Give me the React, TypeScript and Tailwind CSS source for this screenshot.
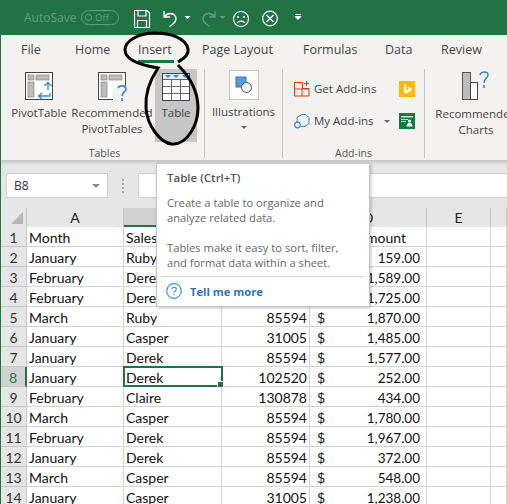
const ui = { fontFamily: '"Open Sans", "Noto Sans", sans-serif' };

const rows: [string, string, string, string, string][] = [
  ["Month", "Sales", "", "", "Amount"],
  ["January", "Ruby", "", "", "159.00"],
  ["February", "Derek", "", "", "1,589.00"],
  ["February", "Derek", "", "", "1,725.00"],
  ["March", "Ruby", "85594", "$", "1,870.00"],
  ["January", "Casper", "31005", "$", "1,485.00"],
  ["January", "Derek", "85594", "$", "1,577.00"],
  ["January", "Derek", "102520", "$", "252.00"],
  ["February", "Claire", "130878", "$", "434.00"],
  ["March", "Casper", "85594", "$", "1,780.00"],
  ["February", "Derek", "85594", "$", "1,967.00"],
  ["January", "Derek", "85594", "$", "372.00"],
  ["March", "Casper", "85594", "$", "548.00"],
  ["January", "Casper", "31005", "$", "1,238.00"],
];

function TitleBar() {
  return (
    <div className="h-[35px] bg-[#217346] flex items-center pl-[23px] text-[#5f9f7d]" style={ui}>
      <span className="text-[12px] w-[57px] leading-none">AutoSave</span>
      <span className="w-[38px] h-[15px] shrink-0 rounded-full border border-[#5f9f7d] flex items-center pl-[3px] gap-[3px] text-[9.500px] leading-none">
        <span className="w-[7px] h-[7px] rounded-full border border-[#5f9f7d]" />
        Off
      </span>
      <svg width="200" height="35" viewBox="0 0 200 35" className="ml-[15px] shrink-0" fill="none">
        <g stroke="#fff" strokeWidth="1.200">
          <path d="M.5 10.500H13l2.500 2.500v14.500H.5z" />
          <path d="M4 10.500v5.500h8v-5.500M3.500 27.500v-7h9v7" />
        </g>
        <path d="M30 11v6h6M30.500 16.500c3-4 9-4 11 0 2 4-1 7-6 10" stroke="#fff" strokeWidth="1.300" />
        <path d="M50.500 16h6l-3 3z" fill="#fff" />
        <path d="M81 11v6h-6M80.500 16.500c-3-4-9-4-11 0-2 4 1 7 6 10" stroke="#5f9f7d" strokeWidth="1.300" />
        <path d="M85.500 16h6l-3 3z" fill="#5f9f7d" />
        <circle cx="107" cy="19" r="7.500" stroke="#fff" strokeWidth="1.200" />
        <circle cx="104" cy="17" r="1" fill="#fff" />
        <circle cx="110" cy="17" r="1" fill="#fff" />
        <path d="M103 23c2-2.500 6-2.500 8 0" stroke="#fff" strokeWidth="1.200" />
        <circle cx="136" cy="18.500" r="7.300" stroke="#fff" strokeWidth="1.200" />
        <path d="M132.500 15l7 7M139.500 15l-7 7" stroke="#fff" strokeWidth="1.200" />
        <path d="M161 14.500h6M161 16.500h6l-3 3z" fill="#fff" stroke="#fff" strokeWidth="1" />
      </svg>
    </div>
  );
}

function Tabs() {
  const tabs: [string, string][] = [
    ["File", "w-[54px]"],
    ["Home", "w-[63px]"],
    ["Insert", "w-[64px]"],
    ["Page Layout", "w-[101px]"],
    ["Formulas", "w-[82px]"],
    ["Data", "w-[56px]"],
    ["Review", "w-[60px]"],
  ];
  return (
    <div className="h-[33px] flex pl-[20px] text-[12.500px] text-[#444]" style={ui}>
      {tabs.map(([t, w]) => (
        <div key={t} className={`${w} shrink-0 relative pt-[6px] leading-[18px] whitespace-nowrap`}>
          {t}
          {t === "Insert" && <div className="absolute left-0 top-[25px] w-[36px] h-[3px] bg-[#217346]" />}
        </div>
      ))}
    </div>
  );
}

function PivotIcon({ help }: { help?: boolean }) {
  return (
    <svg width="34" height="32" viewBox="0 0 34 32" fill="none">
      <rect x="3.500" y="1.500" width="27" height="27" fill="#fff" stroke="#444" />
      <rect x="6" y="4" width="6" height="5" fill="#bdbdbd" stroke="#777" strokeWidth=".6" />
      <rect x="14" y="4" width="13" height="5" fill="#bdbdbd" stroke="#777" strokeWidth=".6" />
      <rect x="6" y="11" width="6" height="15" fill="#bdbdbd" stroke="#777" strokeWidth=".6" />
      {help ? (
        <g>
          <rect x="18" y="17" width="15" height="14" fill="#f3f2f1" />
          <path d="M23 17c1-3 8-3 8 1 0 3-4 3-4 7M27 27v3" stroke="#2e8ad0" strokeWidth="1.600" />
        </g>
      ) : (
        <path d="M28 22v3H17M20 22l-3.500 3 3.500 3M26 19v-7M22.500 15l3.500-3.500 3.500 3.500" stroke="#2e8ad0" strokeWidth="1.300" />
      )}
    </svg>
  );
}

function BigButton({ w, icon, lines, hot, extra = "" }: { w: string; icon: React.ReactNode; lines: string[]; hot?: boolean; extra?: string }) {
  return (
    <div className={`${w} ${extra} shrink-0 h-[73px] flex flex-col items-center ${hot ? "bg-[#c6c6c6]" : ""}`}>
      <div className="h-[36px] flex items-center justify-center">{icon}</div>
      {lines.map((l) => (
        <div key={l} className="text-[11.500px] leading-[16px] whitespace-nowrap text-[#444]">{l}</div>
      ))}
    </div>
  );
}

function GroupLabel({ children }: { children: React.ReactNode }) {
  return <div className="text-center text-[10.500px] leading-[16px] text-[#555] shrink-0">{children}</div>;
}

function Ribbon() {
  return (
    <div className="h-[92px] flex pl-[4px] pt-[1px] text-[#444]" style={ui}>
      <div className="w-[200px] shrink-0 border-r border-[#c6c6c6] h-[89px] flex flex-col">
        <div className="flex h-[76px] shrink-0">
          <BigButton w="w-[68px]" icon={<PivotIcon />} lines={["PivotTable"]} />
          <BigButton w="w-[78px]" icon={<PivotIcon help />} lines={["Recommended", "PivotTables"]} />
          <BigButton
            w="w-[42px]"
            extra="ml-[4px]"
            hot
            lines={["Table"]}
            icon={
              <svg width="29" height="29" viewBox="0 0 29 29" fill="none">
                <rect x=".5" y=".5" width="27" height="27" fill="#fff" stroke="#444" />
                <path d="M1 1h26v5H1z" fill="#e6eef5" />
                <path d="M3 2h6l-3 3zM11 2h6l-3 3zM20 2h6l-3 3z" fill="#2e8ad0" />
                <path d="M1 6.500h26M1 13.500h26M1 20.500h26M9.500 6.500v21M18.500 6.500v21" stroke="#666" />
              </svg>
            }
          />
        </div>
        <GroupLabel>Tables</GroupLabel>
      </div>
      <div className="w-[78px] shrink-0 border-r border-[#c6c6c6] h-[89px] flex flex-col items-center">
        <div className="w-[30px] h-[30px] mt-[1px] bg-white border border-[#c6c6c6] flex items-center justify-center">
          <svg width="18" height="18" viewBox="0 0 18 18">
            <rect x="1" y="1" width="10" height="10" fill="#5b9bd5" stroke="#2e75b6" />
            <circle cx="11.500" cy="11.500" r="5" fill="#f3f2f1" stroke="#555" />
          </svg>
        </div>
        <div className="text-[11.500px] leading-[16px] mt-[4px] whitespace-nowrap">Illustrations</div>
        <div className="mt-[6px] w-0 h-0 border-x-[3px] border-x-transparent border-t-[3px] border-t-[#666]" />
      </div>
      <div className="w-[142px] shrink-0 border-r border-[#c6c6c6] h-[89px] flex flex-col">
        <div className="h-[76px] shrink-0 pl-[11px] pt-[12px] flex flex-col gap-[16px] text-[11.500px]">
          <div className="h-[16px] flex items-center whitespace-nowrap">
            <svg width="16" height="16" viewBox="0 0 16 16" fill="none" className="shrink-0">
              <path d="M.5 1.500h8v6h6.500v7.500H.5zM.5 8h14M8 8v7" stroke="#d83b01" strokeWidth="1" />
              <path d="M12.500 0v5M10 2.500h5" stroke="#d83b01" />
            </svg>
            <span className="ml-[4px] w-[85px]">Get Add-ins</span>
            <svg width="16" height="16" viewBox="0 0 16 16" className="shrink-0">
              <rect width="16" height="16" fill="#ffb900" />
              <path d="M5 3l2 .8v6l3-1.600-1.500-.8-.8-2 5 1.800v2.300L7 12.800 5 11.500z" fill="#fff" />
            </svg>
          </div>
          <div className="h-[16px] flex items-center whitespace-nowrap">
            <svg width="16" height="16" viewBox="0 0 16 16" fill="none" className="shrink-0">
              <path d="M3 9V4.500L8 1.500h3l4 3v6l-4 3H7" stroke="#2e8ad0" strokeWidth="1" />
              <circle cx="3.500" cy="12" r="2.800" stroke="#2e8ad0" strokeWidth="1.200" />
            </svg>
            <span className="ml-[4px] w-[70px]">My Add-ins</span>
            <span className="w-0 h-0 border-x-[3px] border-x-transparent border-t-[3px] border-t-[#666] mr-[9px]" />
            <svg width="16" height="16" viewBox="0 0 16 16" className="shrink-0">
              <rect width="16" height="16" fill="#107c41" />
              <path d="M2 3h12v1.500H2zM2 6h7v1H2zM2 8h5v1H2z" fill="#bfe0cd" />
              <circle cx="10.500" cy="8" r="1.600" fill="#fff" />
              <path d="M7.500 13.500c0-5 6-5 6 0z" fill="#fff" />
            </svg>
          </div>
        </div>
        <GroupLabel>Add-ins</GroupLabel>
      </div>
      <div className="w-[102px] shrink-0 flex flex-col items-center">
        <svg width="30" height="32" viewBox="0 0 30 32" fill="none">
          <rect x="1.500" y="3.500" width="8" height="27" fill="#bdbdbd" stroke="#555" />
          <rect x="9.500" y="13.500" width="7" height="17" fill="#fff" stroke="#444" />
          <path d="M19 6c1-4 8-4 8 0 0 3-4 3.500-4 8M23 16v3" stroke="#2e8ad0" strokeWidth="1.500" />
        </svg>
        <div className="text-[11.500px] leading-[16px] mt-[5px] whitespace-nowrap">Recommended</div>
        <div className="text-[11.500px] leading-[16px]">Charts</div>
      </div>
    </div>
  );
}

function FormulaBar() {
  return (
    <div className="h-[48px] bg-[#e6e6e6] pt-[13px] flex items-start relative" style={ui}>
      <div className="absolute left-0 right-0 top-0 h-[5px] bg-gradient-to-b from-[#c4c4c4] to-[#e6e6e6]" />
      <div className="ml-[5px] w-[102px] h-[25px] bg-white border border-[#d0d0d0] flex items-center justify-between pl-[7px] pr-[7px] text-[12px] text-[#333]">
        B8
        <span className="w-0 h-0 border-x-[4px] border-x-transparent border-t-[4px] border-t-[#888]" />
      </div>
      <div className="w-[30px] h-[25px] flex flex-col items-center justify-center gap-[2px]">
        <span className="w-[2px] h-[2px] bg-[#aaa]" />
        <span className="w-[2px] h-[2px] bg-[#aaa]" />
        <span className="w-[2px] h-[2px] bg-[#aaa]" />
        <span className="w-[2px] h-[2px] bg-[#aaa]" />
      </div>
      <div className="flex-1 h-[25px] bg-white border border-[#d0d0d0] border-r-0" />
    </div>
  );
}

function ColHeaders() {
  const cols: [string, string, string][] = [
    ["A", "w-[97px]", "bg-[#e6e6e6]"],
    ["B", "w-[98px]", "bg-[#d2d2d2] border-b-2 border-b-[#217346]"],
    ["C", "w-[88px]", "bg-[#e6e6e6]"],
    ["D", "w-[117px]", "bg-[#e6e6e6]"],
    ["E", "w-[64px]", "bg-[#e6e6e6]"],
    ["", "flex-1", "bg-[#e6e6e6]"],
  ];
  return (
    <div className="h-[19px] flex bg-[#e6e6e6] text-[14px] text-[#222]" style={{ fontFamily: '"Lato", sans-serif' }}>
      <div className="w-[26px] shrink-0 box-border border-r border-[#c8c8c8] relative">
        <div className="absolute right-[3px] bottom-[3px] w-0 h-0 border-l-[12px] border-l-transparent border-b-[12px] border-b-[#b7b7b7]" />
      </div>
      {cols.map(([c, w, bg]) => (
        <div key={c || "F"} className={`${w} ${bg} box-border border-r border-[#c8c8c8] text-center leading-[20px]`}>{c}</div>
      ))}
    </div>
  );
}

function Grid() {
  const cell = "h-[20px] bg-white box-border border-r border-b border-[#d4d4d4] leading-[22px] px-[2px] whitespace-nowrap overflow-hidden";
  return (
    <div className="text-[14px] text-[#111]" style={{ fontFamily: '"Lato", sans-serif' }}>
      {rows.map((r, i) => {
        const active = i === 7;
        return (
          <div key={i} className="flex h-[20px]">
            <div className={`w-[26px] shrink-0 h-[20px] box-border border-b text-center leading-[22px] ${active ? "bg-[#d2d2d2] text-[#217346] border-b-[#c8c8c8] border-r-2 border-r-[#217346]" : "bg-[#e6e6e6] text-[#333] border-b-[#c8c8c8] border-r border-r-[#c8c8c8]"}`}>
              {i + 1}
            </div>
            <div className={`w-[97px] shrink-0 ${cell}`}>{r[0]}</div>
            <div className={`w-[98px] shrink-0 ${cell} relative !overflow-visible`}>
              {r[1]}
              {active && (
                <div className="absolute left-[-1px] top-[-1px] w-[100px] h-[21px] border-2 border-[#217346]">
                  <div className="absolute right-[-3px] bottom-[-3px] w-[5px] h-[5px] bg-[#217346] border border-white box-content" />
                </div>
              )}
            </div>
            <div className={`w-[88px] shrink-0 ${cell} text-right`}>{r[2]}</div>
            <div className={`w-[117px] shrink-0 ${cell} flex justify-between pl-[7px] ${i === 0 ? "pr-[20px]" : "pr-[6px]"}`}>
              <span>{r[3]}</span>
              <span className={i > 0 ? "text-[13.500px]" : ""}>{r[4]}</span>
            </div>
            <div className={`w-[64px] shrink-0 ${cell}`} />
            <div className={`flex-1 ${cell}`} />
          </div>
        );
      })}
    </div>
  );
}

function Tooltip() {
  return (
    <div className="absolute left-[155px] top-[163px] w-[214px] h-[144px] box-border bg-white border border-[#c6c6c6] shadow-[1px_1px_3px_rgba(0,0,0,0.25)] text-[11.200px] leading-[15px] text-[#666] pt-[6px]" style={ui}>
      <div className="px-[10px] font-semibold text-[#555] leading-[16px] text-[11.500px]">Table (Ctrl+T)</div>
      <div className="px-[10px] mt-[9px]">
        <div>Create a table to organize and</div>
        <div>analyze related data.</div>
        <div className="mt-[15px]">Tables make it easy to sort, filter,</div>
        <div>and format data within a sheet.</div>
      </div>
      <div className="mx-[4px] mt-[6px] border-t border-[#d6d6d6]" />
      <div className="flex items-center pl-[9px] pt-[6px] gap-[8px]">
        <svg width="16" height="16" viewBox="0 0 16 16" fill="none">
          <circle cx="8" cy="8" r="7.300" stroke="#3a96dd" strokeWidth="1.200" />
          <path d="M5.800 6.200c.3-2.500 4.500-2.500 4.500 0 0 1.800-2.300 1.800-2.300 3.600M8 11v1.300" stroke="#3a96dd" strokeWidth="1.200" />
        </svg>
        <span className="font-bold text-[#2e75b6]">Tell me more</span>
      </div>
    </div>
  );
}

export default function App() {
  return (
    <div className="relative w-[507px] h-[504px] overflow-hidden bg-[#f3f2f1] border-l border-[#217346]">
      <TitleBar />
      <Tabs />
      <Ribbon />
      <FormulaBar />
      <ColHeaders />
      <Grid />
      <Tooltip />
      <svg className="absolute left-[-1px] top-0 pointer-events-none" width="507" height="200" viewBox="0 0 507 200" fill="none">
        <path
          d="M178 62C184 58 189 55 188 49C186 38 170 33 155 33C140 33 125 40 125 50C125 60 140 65 158 68C150 80 145 95 146 108C147 125 160 143 172 144C187 145 198 125 198 108C198 90 188 75 178 65"
          stroke="#000"
          strokeWidth="3"
        />
      </svg>
    </div>
  );
}
